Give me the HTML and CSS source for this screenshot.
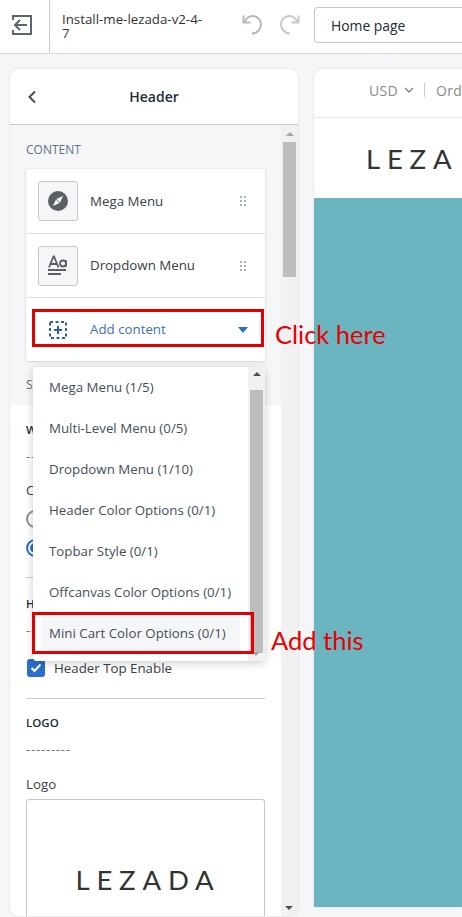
FILE: index.html
```html
<!DOCTYPE html>
<html lang="en">
<head>
<meta charset="utf-8">
<title>Header</title>
<link rel="stylesheet" href="styles.css">
</head>
<body>
<header class="topbar">
  <div class="exit">
    <svg width="22" height="22" viewBox="0 0 22 22" fill="none"><path d="M2 6V2h18v18H2v-4" stroke="#5c6470" stroke-width="2"/><path d="M16 11H4M9 6l-5 5 5 5" stroke="#5c6470" stroke-width="2"/></svg>
  </div>
  <div class="theme-name">Install-me-lezada-v2-4-7</div>
  <div class="history">
    <svg width="22" height="22" viewBox="0 0 22 22" fill="none"><path d="M1.500 1.500v7h7" stroke="#b4b8bd" stroke-width="2"/><path d="M2.500 8C4.500 3.500 7.500 2 10.500 2c5 0 8.500 4 8.500 8.500s-4 9-9 9" stroke="#b4b8bd" stroke-width="2"/></svg>
    <svg width="22" height="22" viewBox="0 0 22 22" fill="none"><path d="M20.500 1.500v7h-7" stroke="#c4c8cc" stroke-width="2"/><path d="M19.500 8C17.500 3.500 14.500 2 11.500 2c-5 0-8.500 4-8.500 8.500s4 9 9 9" stroke="#c4c8cc" stroke-width="2"/></svg>
  </div>
  <div class="page-select">Home page</div>
</header>
<main class="workspace">
  <section class="panel">
    <div class="panel-head">
      <svg class="back" width="10" height="14" viewBox="0 0 10 14" fill="none"><path d="M8 1.500 2.500 7 8 12.500" stroke="#454f5b" stroke-width="2"/></svg>
      <h1>Header</h1>
    </div>
    <div class="panel-body">
      <div class="panel-content">
        <div class="content-zone">
          <div class="caption">CONTENT</div>
          <div class="card">
            <div class="card-row">
              <span class="thumb"><svg width="20" height="20" viewBox="0 0 20 20"><circle cx="10" cy="10" r="10" fill="#5c6066"/><path d="M15 5l-3 6.500L8.500 8z" fill="#fff"/><path d="M5 15l3-6.500 3.500 3.500z" fill="#fff"/></svg></span>
              <span class="row-label">Mega Menu</span>
              <span class="grip"><i></i><i></i><i></i><i></i><i></i><i></i></span>
            </div>
            <div class="card-row">
              <span class="thumb"><svg width="20" height="22" viewBox="0 0 20 22" fill="none"><path d="M1 12.500 5.500 1.500h.5L10.500 12.500M2.500 9h6.500" stroke="#5c6066" stroke-width="1.800"/><circle cx="15" cy="8.500" r="3" stroke="#5c6066" stroke-width="1.800"/><path d="M18 5v7" stroke="#5c6066" stroke-width="1.600"/><path d="M0 15h18" stroke="#5c6066" stroke-width="2"/><path d="M0 19h13" stroke="#5c6066" stroke-width="2"/></svg></span>
              <span class="row-label lifted">Dropdown Menu</span>
              <span class="grip"><i></i><i></i><i></i><i></i><i></i><i></i></span>
            </div>
            <div class="card-row add-row">
              <span class="add-icon"><svg width="18" height="18" viewBox="0 0 18 18" fill="none"><rect x="1" y="1" width="16" height="16" stroke="#2c5fa8" stroke-width="2" stroke-dasharray="3 2.500"/><path d="M9 5v8M5 9h8" stroke="#2c5fa8" stroke-width="2"/></svg></span>
              <span class="row-label add-label lifted">Add content</span>
              <span class="caret"></span>
            </div>
          </div>
          <div class="caption sections">SECTIONS</div>
        </div>
        <div class="settings">
          <div class="sub-title first">WIDTH</div>
          <div class="dashes">---------</div>
          <div class="plain choice-label">Container</div>
          <div class="radio"><span class="radio-dot"></span><span>Full width</span></div>
          <div class="radio"><span class="radio-dot on"></span><span>Boxed</span></div>
          <hr class="rule">
          <div class="sub-title">HEADER TOP</div>
          <div class="dashes">---------</div>
          <label class="check">
            <span class="box"><svg width="12" height="10" viewBox="0 0 12 10" fill="none"><path d="M1.500 5 4.500 8l6-6.500" stroke="#fff" stroke-width="2"/></svg></span>
            Header Top Enable
          </label>
          <hr class="rule second">
          <div class="sub-title logo-title">LOGO</div>
          <div class="dashes">---------</div>
          <div class="plain logo-label">Logo</div>
          <div class="logo-box"><span class="wordmark">LEZADA</span></div>
        </div>
      </div>
      <div class="scrollbar">
        <span class="arrow up"></span>
        <span class="thumb-bar"></span>
        <span class="arrow down"></span>
      </div>
    </div>
    <div class="dropdown">
      <ul class="menu">
        <li>Mega Menu (1/5)</li>
        <li>Multi-Level Menu (0/5)</li>
        <li>Dropdown Menu (1/10)</li>
        <li>Header Color Options (0/1)</li>
        <li>Topbar Style (0/1)</li>
        <li>Offcanvas Color Options (0/1)</li>
        <li class="hover">Mini Cart Color Options (0/1)</li>
      </ul>
      <div class="menu-scroll">
        <span class="arrow up"></span>
        <span class="menu-thumb"></span>
        <span class="arrow down light"></span>
      </div>
    </div>
  </section>
  <section class="preview">
    <div class="preview-top"><span class="cur">USD</span><svg class="chevron" width="10" height="6" viewBox="0 0 10 6" fill="none"><path d="M1 1l4 4 4-4" stroke="#858585" stroke-width="1.300"/></svg><span class="sep"></span><span class="cur">Ord</span></div>
    <div class="preview-logo"><span class="wordmark">LEZA</span></div>
    <div class="hero"></div>
  </section>
</main>
<div class="mark mark-add"></div>
<div class="mark mark-item"></div>
<div class="note note-click">Click here</div>
<div class="note note-add">Add this</div>
</body>
</html>
```
FILE: styles.css
```css
* { box-sizing: border-box; }
html, body { margin: 0; height: 917px; overflow: hidden; }
body {
  position: relative;
  width: 462px;
  background: #f4f6f8;
  font-family: "Open Sans", "Noto Sans", sans-serif;
  font-size: 13.300px;
  color: #3a4048;
}
.topbar {
  display: flex;
  align-items: center;
  height: 54px;
  background: #fff;
  border-bottom: 1px solid #dadce0;
}
.exit {
  flex: none;
  width: 50px;
  height: 53px;
  display: flex;
  align-items: center;
  padding: 0 0 3px 11px;
  border-right: 1px solid #c9cccf;
}
.theme-name {
  flex: none;
  width: 146px;
  margin: 0 0 2px 12px;
  font-size: 13.300px;
  line-height: 14px;
  color: #333;
}
.history { flex: none; display: flex; gap: 14px; margin: 0 0 3px 34px; width: 72px; }
.page-select {
  flex: none;
  width: 148px;
  height: 36px;
  margin-bottom: 3px;
  padding-left: 16px;
  display: flex;
  align-items: center;
  background: #fff;
  border: 1px solid #c4c8cc;
  border-right: 0;
  border-radius: 4px 0 0 4px;
  font-size: 13.900px;
  color: #212b36;
}
.workspace {
  display: flex;
  gap: 16px;
  padding: 15px 0 0 10px;
  height: 863px;
}
.panel {
  position: relative;
  flex: none;
  width: 288px;
  height: 847px;
  background: #fff;
  border-radius: 8px;
  box-shadow: 0 0 2px rgba(0,0,0,.15);
  display: flex;
  flex-direction: column;
}
.panel-head {
  flex: none;
  position: relative;
  height: 56px;
  display: flex;
  align-items: center;
  justify-content: center;
  border-bottom: 1px solid #c9cccf;
}
.panel-head h1 { margin: 0; font-size: 14px; font-weight: 600; color: #212b36; }
.back { position: absolute; left: 17px; top: 21px; }
.panel-body { flex: 1; display: flex; min-height: 0; }
.panel-content { flex: none; width: 271px; overflow: hidden; }
.content-zone { background: #f4f6f8; height: 280px; padding: 17px 16px 0; }
.caption { font-size: 12px; color: #637381; line-height: 16px; height: 27px; }
.sections { margin-top: 16px; }
.card {
  width: 239px;
  background: #fff;
  border-radius: 3px;
  box-shadow: 0 0 0 1px rgba(63,63,68,.03), 0 1px 3px rgba(63,63,68,.15);
}
.card-row {
  height: 64px;
  display: flex;
  align-items: center;
  padding: 0 19px 0 12px;
  border-bottom: 1px solid #dfe3e8;
}
.card-row:first-child { height: 65px; }
.card-row:last-child { border-bottom: 0; height: 63px; }
.thumb {
  flex: none;
  width: 40px;
  height: 40px;
  display: flex;
  align-items: center;
  justify-content: center;
  background: #f4f6f8;
  border: 1px solid #c4c8cc;
  border-radius: 3px;
}
.row-label { flex: 1; margin-left: 12px; color: #3a4048; }
.row-label.lifted { padding-bottom: 2px; }
.add-icon { flex: none; width: 40px; display: flex; padding-left: 11px; }
.add-label { color: #3f6fb5; }
.grip { display: grid; grid-template-columns: 2px 2px; gap: 2px; width: 6px; }
.grip i { display: block; width: 2px; height: 2px; background: #a9b3bc; }
.caret { width: 0; height: 0; border: 5px solid transparent; border-top: 6px solid #2c6ecb; border-bottom: 0; margin-right: -2px; }
.settings { padding: 17px 16px 0; height: 600px; }
.sub-title { font-size: 11.500px; font-weight: 600; line-height: 16px; color: #212b36; }
.dashes { margin-top: 10px; line-height: 16px; color: #6b7280; letter-spacing: .7px; }
.plain { margin-top: 17px; line-height: 18px; color: #3a4048; }
.choice-label { margin-bottom: 5px; }
.radio { display: flex; align-items: center; gap: 8px; height: 29px; }
.radio-dot { width: 18px; height: 18px; border-radius: 50%; border: 2px solid #8c9196; }
.radio-dot.on { border: 2px solid #2c6ecb; box-shadow: inset 0 0 0 2px #fff, inset 0 0 0 8px #2c6ecb; }
.rule { margin: 15px 0 0; border: 0; border-top: 1px solid #c9cccf; width: 239px; }
.rule + .sub-title { margin-top: 18px; }
.rule.second { margin-top: 21px; }
.rule.second + .sub-title { margin-top: 16px; }
.check { display: flex; align-items: center; gap: 9px; margin-top: 21px; line-height: 18px; color: #3a4048; }
.box {
  flex: none;
  width: 18px;
  height: 18px;
  margin-left: 1px;
  display: flex;
  align-items: center;
  justify-content: center;
  background: #2c6ecb;
  border-radius: 3px;
}
.logo-label { margin-top: 18px; }
.logo-box {
  width: 239px;
  height: 200px;
  margin-top: 6px;
  padding: 65px 0 0 5px;
  text-align: center;
  border: 1px solid #c4c8cc;
  border-radius: 3px;
}
.wordmark {
  font-family: "Lato", "Open Sans", sans-serif;
  font-weight: 400;
  font-size: 27.500px;
  letter-spacing: 6.800px;
  color: #333;
  line-height: 30px;
}
.scrollbar {
  flex: none;
  width: 17px;
  display: flex;
  flex-direction: column;
  align-items: center;
  background: #f1f1f1;
  position: relative;
}
.thumb-bar { width: 13px; height: 135px; background: #bdbdbd; margin-top: 6px; }
.arrow { width: 0; height: 0; border: 4px solid transparent; }
.scrollbar .arrow.up { margin-top: 7px; border-bottom: 4px solid #a3a3a3; border-top: 0; }
.scrollbar .arrow.down { position: absolute; bottom: 6px; left: 4px; border-top: 4px solid #505050; border-bottom: 0; }
.dropdown {
  position: absolute;
  left: 23px;
  top: 298px;
  width: 232px;
  height: 294px;
  display: flex;
  background: #fff;
  border-radius: 4px;
  box-shadow: 0 2px 8px rgba(0,0,0,.2);
}
.menu { flex: 1; margin: -1px 0 0; padding: 0; list-style: none; }
.menu li {
  height: 41px;
  display: flex;
  align-items: center;
  padding-left: 16px;
  color: #454f5b;
  white-space: nowrap;
}
.menu li.hover { background: #f4f6f8; margin: 2px 8px 0; padding-left: 8px; height: 38px; }
.menu-scroll {
  flex: none;
  width: 17px;
  position: relative;
  display: flex;
  flex-direction: column;
  align-items: center;
  background: #f1f1f1;
  border-radius: 0 4px 4px 0;
}
.menu-scroll .arrow.up { margin-top: 5px; border-bottom: 4px solid #505050; border-top: 0; }
.menu-thumb { width: 13px; height: 263px; margin-top: 14px; background: #bdbdbd; }
.menu-scroll .arrow.down { position: absolute; bottom: 5px; left: 4px; border-top: 4px solid #a3a3a3; border-bottom: 0; }
.preview {
  flex: none;
  width: 148px;
  height: 838px;
  background: #fff;
  border-radius: 8px 0 0 0;
  box-shadow: 0 0 2px rgba(0,0,0,.15);
  overflow: hidden;
}
.preview-top {
  height: 49px;
  display: flex;
  align-items: center;
  padding: 0 0 6px 55px;
  gap: 6px;
  font-size: 14px;
  color: #8a8a8a;
  letter-spacing: .3px;
  border-bottom: 1px solid #e6e6e6;
}
.cur { flex: none; }
.chevron { flex: none; }
.sep { flex: none; width: 1px; height: 14px; background: #ccc; margin: 0 5px 0 4px; }
.preview-logo { height: 80px; padding: 26px 0 0 52px; }
.hero { height: 709px; background: #6ab5bf; }
.mark { position: absolute; border: 3px solid #e30000; }
.mark-add { left: 32px; top: 309px; width: 232px; height: 38px; }
.mark-item { left: 32px; top: 612px; width: 222px; height: 42px; }
.note {
  position: absolute;
  font-family: "Lato", sans-serif;
  font-size: 25.500px;
  font-weight: 400;
  line-height: 30px;
  color: #e60000;
  white-space: nowrap;
}
.note-click { left: 275px; top: 319px; }
.note-add { left: 271px; top: 625px; }
```
